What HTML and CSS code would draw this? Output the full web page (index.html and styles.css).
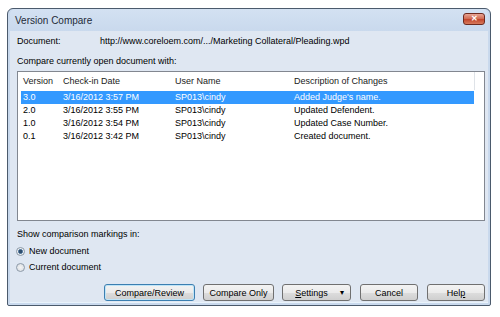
FILE: index.html
```html
<!DOCTYPE html>
<html lang="en">
<head>
  <meta charset="UTF-8" />
  <title>Version Compare</title>
  <link rel="stylesheet" href="styles.css">
</head>
<body>
  <div class="window">
    <div class="titlebar">
      <span class="title">Version Compare</span>
      <button class="close" aria-label="Close">&#x2715;</button>
    </div>

    <div class="client">
      <div class="doc-row">
        <span class="doc-label">Document:</span>
        <span class="doc-path">http://www.coreloem.com/.../Marketing Collateral/Pleading.wpd</span>
      </div>
      <div class="label">Compare currently open document with:</div>

      <!-- список версий -->
      <div class="list">
        <div class="list-row list-head">
          <span>Version</span>
          <span>Check-in Date</span>
          <span>User Name</span>
          <span>Description of Changes</span>
        </div>
        <div class="list-row selected">
          <span>3.0</span>
          <span>3/16/2012 3:57 PM</span>
          <span>SP013\cindy</span>
          <span>Added Judge's name.</span>
        </div>
        <div class="list-row">
          <span>2.0</span>
          <span>3/16/2012 3:55 PM</span>
          <span>SP013\cindy</span>
          <span>Updated Defendent.</span>
        </div>
        <div class="list-row">
          <span>1.0</span>
          <span>3/16/2012 3:54 PM</span>
          <span>SP013\cindy</span>
          <span>Updated Case Number.</span>
        </div>
        <div class="list-row">
          <span>0.1</span>
          <span>3/16/2012 3:42 PM</span>
          <span>SP013\cindy</span>
          <span>Created document.</span>
        </div>
      </div>

      <div class="label markings">Show comparison markings in:</div>
      <label class="radio first"><span class="dot checked"></span>New document</label>
      <label class="radio"><span class="dot"></span>Current document</label>

      <div class="buttons">
        <button class="btn default w-review">Compare/Review</button>
        <button class="btn w-only">Compare Only</button>
        <button class="btn w-settings"><span><u>S</u>ettings</span><span class="arrow">&#9662;</span></button>
        <button class="btn w-cancel">Cancel</button>
        <button class="btn w-help">Hel<u>p</u></button>
      </div>
    </div>
  </div>
</body>
</html>
```

FILE: styles.css
```css
/* ======= Общие ======= */
body {
  margin: 0;
  background: #ffffff;
  font-family: "Liberation Sans", Arial, sans-serif;
  font-size: 9px;
  color: #000;
}

/* ======= Окно ======= */
.window {
  box-sizing: border-box;
  width: 484px;
  height: 298px;
  margin: 8px 0 0 7px;
  border: 1px solid #4b5a6c;
  border-radius: 6px 6px 2px 2px;
  background: #c9d9ed;
  padding: 0 2px 2px;
  display: flex;
  flex-direction: column;
}
.titlebar {
  height: 22px;
  display: flex;
  align-items: center;
  justify-content: space-between;
  padding-left: 5px;
  background: linear-gradient(#d3e1f2, #c9d9ed);
  border-radius: 5px 5px 0 0;
}
.title {
  font-size: 10px;
  color: #1e2a38;
}
.close {
  width: 22px;
  height: 12px;
  margin-right: 3px;
  margin-top: -2px;
  padding: 0;
  border: 1px solid #6e2a1f;
  border-radius: 3px;
  background: linear-gradient(#e8a493, #d0684f 50%, #c1432a 51%, #d77a5c);
  color: #fff;
  font-size: 8px;
  font-weight: bold;
  line-height: 10px;
}

.client {
  flex: 1;
  background: #dfe7f2;
  padding: 4px 3px 0 7px;
  border-bottom: 1px solid #e9f3fb;
}
.doc-row {
  display: flex;
  line-height: 12px;
}
.doc-label {
  width: 83px;
}
.label {
  line-height: 12px;
  margin-top: 8px;
}

/* ======= Список ======= */
.list {
  box-sizing: border-box;
  height: 150px;
  margin-top: 4px;
  background: #fff;
  border: 1px solid #828790;
}
.list-row {
  display: grid;
  grid-template-columns: 40px 112px 119px 182px;
  width: 453px;
  margin-left: 3px;
  height: 13px;
  line-height: 13px;
}
.list-row span {
  padding-left: 2px;
  white-space: nowrap;
}
.list-head {
  height: 18px;
  line-height: 18px;
  margin-bottom: 1px;
  border-right: 1px solid #dfe3e8;
  color: #1a1a1a;
}
.selected {
  background: #3399ff;
  color: #fff;
}

/* ======= Переключатели ======= */
.markings {
  margin-top: 7px;
}
.radio {
  display: flex;
  align-items: center;
  gap: 4px;
  line-height: 12px;
  margin-top: 4px;
  margin-left: -1px;
}
.radio.first {
  margin-top: 5px;
}
.dot {
  box-sizing: border-box;
  width: 9px;
  height: 9px;
  border-radius: 50%;
  border: 1px solid #8d9aa8;
  background: radial-gradient(#f4f4f4, #d6dbe1);
}
.dot.checked {
  background: radial-gradient(#2f4e6e 30%, #6d8fb0 45%, #f1f3f5 55%, #d6dbe1);
}

/* ======= Кнопки ======= */
.buttons {
  display: flex;
  gap: 8px;
  margin-top: 11px;
  padding-left: 87px;
}
.btn {
  box-sizing: border-box;
  height: 17px;
  padding: 0;
  border: 1px solid #707070;
  border-radius: 3px;
  background: linear-gradient(#f3f3f3, #ebebeb 50%, #dddddd 51%, #cfcfcf);
  font-family: "Liberation Sans", Arial, sans-serif;
  font-size: 9px;
  color: #000;
}
.btn.default {
  border-color: #3c7fb1;
  box-shadow: inset 0 0 0 1px #bfe4f7;
}
.w-review { width: 91px; }
.w-only { width: 71px; }
.w-settings {
  width: 69px;
  display: flex;
  align-items: center;
  justify-content: center;
  gap: 12px;
  padding-left: 6px;
}
.arrow {
  font-size: 8px;
}
.w-cancel { width: 58px; margin-left: 1px; }
.w-help { width: 58px; margin-left: 1px; }
```
